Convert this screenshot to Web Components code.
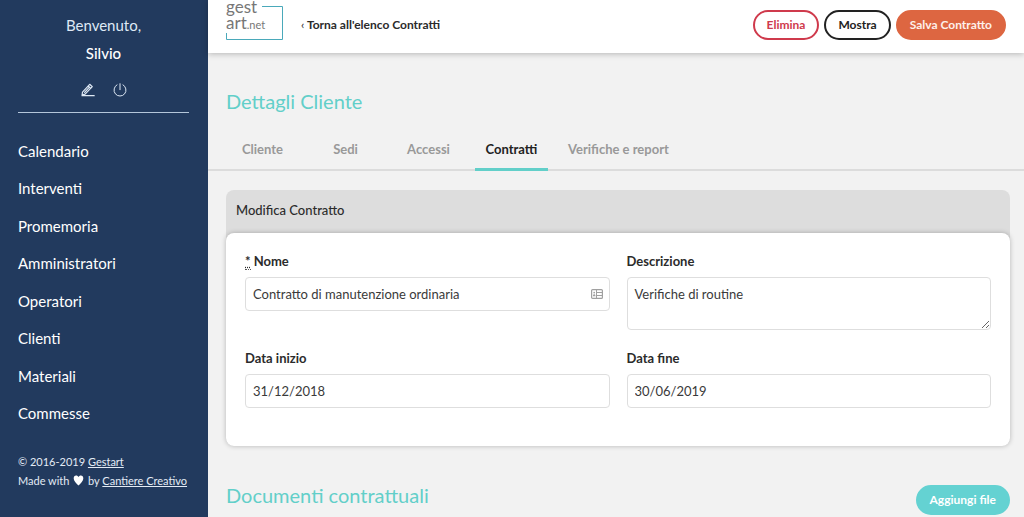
<!DOCTYPE html>
<html lang="it">
<head>
<meta charset="utf-8">
<meta name="viewport" content="width=device-width, initial-scale=1">
<title>Gestart - Contratti</title>
<style>
  html, body { margin: 0; }
  body { font-family: Lato, "Noto Sans", sans-serif; font-size: 13px; color: #2b2b2b; background: #f2f2f2; }
</style>
</head>
<body>
<gestart-app></gestart-app>

<script>
const define = (name, markup) => {
  const template = document.createElement('template');
  template.innerHTML = '<style>*{box-sizing:border-box}</style>' + markup;
  customElements.define(name, class extends HTMLElement {
    constructor() {
      super();
      this.attachShadow({ mode: 'open' }).append(template.content.cloneNode(true));
    }
  });
};

define('user-panel', `
  <style>
    :host { display: block; text-align: center; color: #dfe9f5; font-size: 15px; line-height: 28px;
            padding-top: 11px; border-bottom: 1px solid #b4c6da; }
    strong { display: block; color: #fff; font-weight: 500; }
    .actions { display: flex; justify-content: center; gap: 18px; height: 45px; align-items: center; }
    a { display: block; color: inherit; line-height: 0; }
    svg { display: block; fill: none; stroke: currentColor; stroke-width: 1; stroke-linecap: round; stroke-linejoin: round; }
  </style>
  Benvenuto,<strong>Silvio</strong>
  <div class="actions">
    <a href="#profilo" aria-label="Modifica profilo"><svg width="14" height="14" viewBox="0 0 14 14"><path d="M1.500 9.200 8.700 1.300l2.600 2.400-7.200 7.500-3 .6zM7.200 3l2.600 2.400M3.600 9.300l4.600-4.900M1 12.700h12.200" stroke-width="1.200"/></svg></a>
    <a href="#esci" aria-label="Esci"><svg width="14" height="14" viewBox="0 0 14 14"><path d="M7 .7v6M4 1.800a6 6 0 1 0 6 0"/></svg></a>
  </div>`);

define('side-nav', `
  <style>
    :host { display: block; }
    nav { display: grid; grid-auto-rows: 1fr; height: 100%; }
    ::slotted(a) { display: flex; align-items: center; min-height: 30px; color: #fff; text-decoration: none; font-size: 15px; }
  </style>
  <nav><slot></slot></nav>`);

define('side-footer', `
  <style>
    :host { display: block; padding: 20px 0 27px; font-size: 11px; line-height: 19px; color: #e3ebf5; white-space: nowrap; }
    a { color: inherit; }
    svg { display: inline-block; vertical-align: -1px; margin: 0 1px; }
  </style>
  <div>© 2016-2019 <a href="#gestart">Gestart</a></div>
  <div>Made with <svg width="11" height="11" viewBox="0 0 11 11" role="img" aria-label="amore"><path fill="#fff" d="M5.500 10.600C3.400 8.400.9 6.300.7 3.800.6 1.700 1.700.6 3.100.6c1.100 0 2 .7 2.400 1.500C5.900 1.300 6.800.6 7.900.6c1.400 0 2.500 1.100 2.400 3.200C10.100 6.300 7.600 8.400 5.500 10.600z"/></svg> by <a href="#cantiere">Cantiere Creativo</a></div>`);

define('gestart-logo', `
  <style>:host { display: block; } svg { display: block; font-family: Lato, sans-serif; fill: #777; }</style>
  <svg width="58" height="42" viewBox="0 0 58 42" role="img" aria-label="gestart.net">
    <path d="M36 6.500H56.500V39.500H.500V33" fill="none" stroke="#4aa9ba"/>
    <text x="0" y="13" font-size="17">gest</text>
    <text x="0" y="29" font-size="17">art<tspan font-size="11">.net</tspan></text>
  </svg>`);

define('pill-button', `
  <style>
    :host { display: block; }
    button { display: block; height: 30px; padding: 0 12px; border: 2px solid var(--edge, #222); border-radius: 15px;
             background: var(--fill, #fff); color: var(--ink, #222); font: 700 12px/16px Lato, sans-serif; white-space: nowrap; }
    :host([kind=danger]) { --edge: #cf3a4c; --ink: #cf3a4c; }
    :host([kind=primary]) { --edge: #dd6641; --fill: #dd6641; --ink: #fdf0ea; }
    :host([kind=accent]) { --edge: #64d2d2; --fill: #64d2d2; --ink: #fff; }
  </style>
  <button type="button"><slot></slot></button>`);

define('top-bar', `
  <style>
    :host { display: flex; align-items: flex-start; height: 53px; padding: 0 18px; background: #fff;
            box-shadow: 0 1px 6px rgba(0,0,0,.25); }
    .back { margin: 15px auto 0 17px; color: #2b2b2b; font-weight: 700; font-size: 12px; line-height: 19px; text-decoration: none; }
    .back span { font-weight: 400; }
    .buttons { display: flex; gap: 5px; padding-top: 10px; }
  </style>
  <gestart-logo></gestart-logo>
  <a class="back" href="#contratti"><span>‹</span> Torna all'elenco Contratti</a>
  <div class="buttons"><slot></slot></div>`);

define('tab-bar', `
  <style>
    :host { display: block; border-bottom: 2px solid #dcdcdc; padding: 0 18px; }
    nav { display: flex; gap: 10px; }
    ::slotted(a) { display: block; min-width: 73px; padding: 0 10px; line-height: 38px; text-align: center; color: #999;
                   font-weight: 700; font-size: 13px; text-decoration: none; border-bottom: 3px solid transparent; margin-bottom: -2px; white-space: nowrap; }
    ::slotted(a[aria-current]) { color: #222; border-color: #62cfc9; }
  </style>
  <nav><slot></slot></nav>`);

define('form-card', `
  <style>
    :host { display: block; border-radius: 8px; background: #ddd; }
    h2 { margin: 0; padding: 0 10px; font-size: 13px; line-height: 40px; height: 43px; font-weight: 500; }
    .body { background: #fff; border-radius: 8px; padding: 18px 19px 38px; box-shadow: 0 0 5px rgba(0,0,0,.25); }
  </style>
  <h2><slot name="title"></slot></h2>
  <div class="body"><slot></slot></div>`);

define('contract-form', `
  <style>
    :host { display: block; }
    form { display: grid; grid-template-columns: 1fr 1fr; gap: 18px 17px; align-items: start; }
    label { display: block; margin-bottom: 6px; font-weight: 700; font-size: 13px; line-height: 20px; }
    abbr { text-decoration: underline dotted; border-bottom: 1px dotted #555; }
    input, textarea { display: block; width: 100%; margin: 0; border: 1px solid #dedede; border-radius: 4px; background: #fff;
            color: #3a3a3a; font: 400 13px/20px Lato, sans-serif; outline: 0; }
    input { height: 34px; padding: 0 7px 1px; }
    textarea { height: 53px; padding: 6px 7px; resize: vertical; }
    .box { position: relative; }
    .box svg { position: absolute; right: 7px; top: 12px; }
  </style>
  <form>
    <div><label for="nome"><abbr title="obbligatorio">*</abbr> Nome</label>
      <div class="box"><input id="nome" type="text" value="Contratto di manutenzione ordinaria">
        <svg width="12" height="10" viewBox="0 0 12 10" aria-hidden="true"><rect x=".6" y=".6" width="10.800" height="8.800" rx="1" fill="#fff" stroke="#a0a0a0" stroke-width="1.200"/><path d="M6 3.500h5M6 6.500h5M5.500 1v8" stroke="#a0a0a0"/><circle cx="3.200" cy="3.600" r=".9" fill="#a0a0a0"/><path d="M1.900 7.200c0-2.500 2.600-2.500 2.600 0z" fill="#a0a0a0"/></svg></div></div>
    <div><label for="descrizione">Descrizione</label><textarea id="descrizione">Verifiche di routine</textarea></div>
    <div><label for="inizio">Data inizio</label><input id="inizio" type="text" value="31/12/2018"></div>
    <div><label for="fine">Data fine</label><input id="fine" type="text" value="30/06/2019"></div>
  </form>`);

define('section-title', `
  <style>
    :host { display: flex; justify-content: space-between; align-items: flex-start; }
    h1 { margin: 0; font-size: 20px; line-height: 20px; font-weight: 400; color: #62cfc9; }
  </style>
  <h1><slot></slot></h1><slot name="action"></slot>`);

define('gestart-app', `
  <style>
    :host { display: flex; min-height: 100vh; }
    aside { flex: 0 0 208px; min-width: 0; display: flex; flex-direction: column; padding: 0 19px 0 18px; background: #223a5e; }
    side-nav { flex: 1; margin-top: 19px; }
    .page { flex: 1; min-width: 0; }
    section-title { margin: 38px 18px 0; }
    tab-bar { margin-top: 19px; }
    form-card { margin: 19px 14px 0 18px; }
    .docs { margin: 39px 14px 0 18px; }
  </style>
  <aside>
    <user-panel></user-panel>
    <side-nav>
      <a href="#calendario">Calendario</a><a href="#interventi">Interventi</a><a href="#promemoria">Promemoria</a><a href="#amministratori">Amministratori</a><a href="#operatori">Operatori</a><a href="#clienti">Clienti</a><a href="#materiali">Materiali</a><a href="#commesse">Commesse</a>
    </side-nav>
    <side-footer></side-footer>
  </aside>
  <div class="page">
    <top-bar>
      <pill-button kind="danger">Elimina</pill-button><pill-button>Mostra</pill-button><pill-button kind="primary">Salva Contratto</pill-button>
    </top-bar>
    <main>
      <section-title>Dettagli Cliente</section-title>
      <tab-bar>
        <a href="#cliente">Cliente</a><a href="#sedi">Sedi</a><a href="#accessi">Accessi</a><a href="#contratti" aria-current="page">Contratti</a><a href="#verifiche">Verifiche e report</a>
      </tab-bar>
      <form-card><span slot="title">Modifica Contratto</span><contract-form></contract-form></form-card>
      <section-title class="docs">Documenti contrattuali<pill-button slot="action" kind="accent">Aggiungi file</pill-button></section-title>
    </main>
  </div>`);
</script>
</body>
</html>
